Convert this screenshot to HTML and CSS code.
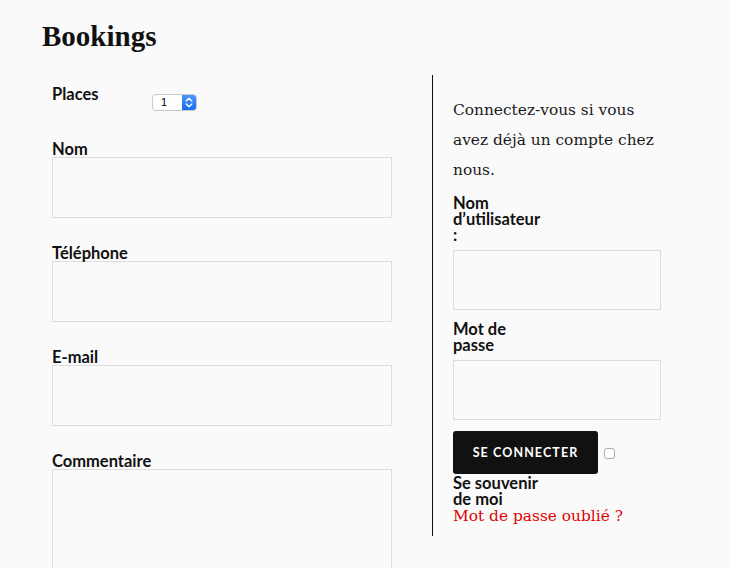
FILE: index.html
```html
<!DOCTYPE html>
<html lang="fr">
<head>
<meta charset="utf-8">
<title>Bookings</title>
<link rel="stylesheet" href="styles.css">
</head>
<body>
<div class="page">
  <h1 class="title">Bookings</h1>
  <div class="cols">
    <form class="left">
      <div class="places-row">
        <label class="places-label">Places</label>
        <div class="select">
          <span class="select-value">1</span>
          <span class="select-arrows">
            <svg width="8" height="11" viewBox="0 0 8 11"><path d="M1.2 4 L4 1.3 L6.8 4 M1.2 7 L4 9.7 L6.8 7" fill="none" stroke="#fff" stroke-width="1.4" stroke-linecap="round" stroke-linejoin="round"/></svg>
          </span>
        </div>
      </div>
      <div class="field">
        <label class="lbl">Nom</label>
        <input class="inp" type="text">
      </div>
      <div class="field">
        <label class="lbl">Téléphone</label>
        <input class="inp" type="text">
      </div>
      <div class="field">
        <label class="lbl">E-mail</label>
        <input class="inp" type="text">
      </div>
      <div class="field">
        <label class="lbl">Commentaire</label>
        <textarea class="txt"></textarea>
      </div>
    </form>
    <div class="right">
      <p class="intro">Connectez-vous si vous avez déjà un compte chez nous.</p>
      <label class="rlbl">Nom d’utilisateur :</label>
      <input class="rinp" type="text">
      <label class="rlbl">Mot de passe</label>
      <input class="rinp" type="password">
      <div class="btn-row">
        <button class="btn" type="button">SE CONNECTER</button>
        <span class="check"></span>
      </div>
      <label class="rlbl remember">Se souvenir de moi</label>
      <a class="forgot" href="#">Mot de passe oublié ?</a>
    </div>
  </div>
</div>
</body>
</html>
```

FILE: styles.css
```css
html, body {
  margin: 0;
  padding: 0;
  background: #fafafa;
  height: 100%;
  overflow: hidden;
}
.page {
  padding: 0 0 0 42px;
}
.title {
  margin: 0;
  padding-top: 17px;
  font-family: "Liberation Serif", "DejaVu Serif", serif;
  font-weight: 700;
  font-size: 29px;
  line-height: 38px;
  color: #111;
}
.cols {
  display: flex;
  margin-top: 20px;
  align-items: flex-start;
}
.left {
  width: 340px;
  padding: 10px 0 0 10px;
  margin: 0;
}
.lbl, .places-label, .rlbl {
  font-family: Lato, "Liberation Sans", sans-serif;
  font-weight: 700;
  font-size: 16.5px;
  line-height: 16px;
  color: #111;
}
.places-row {
  display: flex;
  align-items: flex-start;
  height: 56px;
}
.places-label {
  width: 100px;
  padding-top: 1px;
}
.select {
  display: inline-flex;
  margin-top: 9px;
  width: 45px;
  height: 17px;
  box-sizing: border-box;
  border: 1px solid #c8c8c8;
  border-radius: 4px;
  background: #fff;
  overflow: hidden;
}
.select-value {
  flex: 1;
  font-family: "Liberation Sans", sans-serif;
  font-size: 11px;
  line-height: 15px;
  padding-left: 8px;
  color: #000;
}
.select-arrows {
  width: 14px;
  background: linear-gradient(#4b97fb, #1b6cf2);
  display: flex;
  align-items: center;
  justify-content: center;
}
.field {
  margin-bottom: 27px;
}
.lbl {
  display: block;
}
.inp, .txt, .rinp {
  display: block;
  box-sizing: border-box;
  width: 340px;
  height: 61px;
  margin: 0;
  border: 1px solid #ddd;
  background: #fafafa;
  padding: 0;
}
.txt {
  height: 140px;
  resize: none;
}
.right {
  margin-left: 40px;
  border-left: 1px solid #111;
  padding: 20px 0 11px 20px;
  width: 208px;
}
.intro {
  margin: 0 0 10px;
  font-family: "DejaVu Serif", "Liberation Serif", serif;
  font-size: 15.4px;
  line-height: 30px;
  color: #1a1a1a;
}
.rlbl {
  display: block;
  width: 90px;
}
.rinp {
  width: 208px;
  height: 60px;
  margin: 7px 0 11px;
}
.btn-row {
  display: flex;
  align-items: center;
}
.btn {
  width: 145px;
  height: 43px;
  background: #111;
  color: #fff;
  border: none;
  border-radius: 3px;
  font-family: Lato, "Liberation Sans", sans-serif;
  font-weight: 700;
  font-size: 12.5px;
  letter-spacing: 1.1px;
  padding: 0;
}
.check {
  width: 11px;
  height: 11px;
  margin-left: 6px;
  margin-top: 2px;
  border: 1px solid #aaa;
  border-radius: 3px;
  background: #fff;
  box-sizing: border-box;
}
.remember {
  margin-top: 1px;
}
.forgot {
  display: block;
  font-family: "DejaVu Serif", "Liberation Serif", serif;
  font-size: 15.4px;
  line-height: 18px;
  color: #e00000;
  text-decoration: none;
}
```
